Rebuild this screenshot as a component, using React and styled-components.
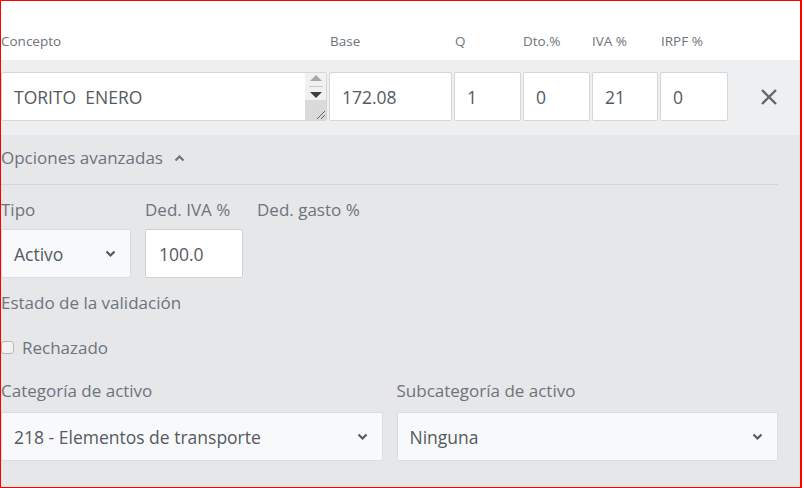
import styled, { createGlobalStyle } from "styled-components";

const GlobalStyle = createGlobalStyle`
  html, body {
    margin: 0;
    padding: 0;
    background: #ffffff;
  }
  * {
    box-sizing: border-box;
  }
`;

const Frame = styled.div`
  width: 802px;
  height: 488px;
  border: 1px solid #ff0000;
  border-right-width: 2px;
  background: #ffffff;
  font-family: "Open Sans", "Liberation Sans", sans-serif;
  overflow: hidden;
  display: flex;
  flex-direction: column;
`;

const cols = "326px 123px 67px 67px 66px 68px 1fr";

const HeaderRow = styled.div`
  height: 59px;
  display: grid;
  grid-template-columns: ${cols};
  column-gap: 2px;
  align-items: end;
  padding-bottom: 10px;
`;

const HeadLabel = styled.span`
  font-size: 13.5px;
  color: #6e737c;
  padding-left: ${(p) => p.$pad || 0}px;
  line-height: 18px;
`;

const LineBand = styled.div`
  background: #eeeff1;
  padding: 12px 0 14px;
  display: grid;
  grid-template-columns: ${cols};
  column-gap: 2px;
  align-items: center;
`;

const Field = styled.div`
  position: relative;
  height: 49px;
  background: #ffffff;
  border: 1px solid #d6d6d6;
  border-radius: 2px;
  display: flex;
  align-items: center;
  padding-left: 12px;
  font-size: 17.5px;
  color: #555a61;
`;

const Spinner = styled.div`
  position: absolute;
  top: 0;
  right: 0;
  width: 21px;
  height: 100%;
  display: flex;
  flex-direction: column;
`;

const SpinTop = styled.div`
  height: 27px;
  background: #f1f1f1;
  display: flex;
  flex-direction: column;
  align-items: center;
  justify-content: center;
  gap: 5px;
`;

const Tri = styled.div`
  width: 0;
  height: 0;
  border-left: 6px solid transparent;
  border-right: 6px solid transparent;
  ${(p) =>
    p.$up
      ? "border-bottom: 6px solid #a8a8a8;"
      : "border-top: 6px solid #3c3c3c;"}
`;

const SpinSep = styled.div`
  width: 14px;
  height: 1px;
  background: #c8c8c8;
`;

const Grip = styled.div`
  flex: 1;
  background: #dadada;
  display: flex;
  align-items: flex-end;
  justify-content: flex-end;
`;

const RemoveButton = styled.button`
  border: none;
  background: none;
  padding: 0;
  margin-left: 28px;
  width: 22px;
  height: 22px;
  display: flex;
  align-items: center;
  justify-content: center;
  cursor: pointer;
`;

const Advanced = styled.div`
  flex: 1;
  background: #e6e7e9;
  padding-right: 22px;
`;

const Toggle = styled.div`
  height: 50px;
  display: flex;
  align-items: center;
  gap: 11px;
  font-size: 17px;
  color: #6e737c;
  border-bottom: 1px solid #d3d4d6;
  padding-bottom: 4px;
`;

const Label = styled.div`
  font-size: 17px;
  color: #6e737c;
  line-height: 22px;
`;

const FieldGroup = styled.div`
  display: flex;
  flex-direction: column;
  gap: ${(p) => p.$gap || 8}px;
`;

const TypeRow = styled.div`
  display: flex;
  gap: 14px;
  margin-top: 14px;
`;

const SelectBox = styled.div`
  height: 49px;
  width: ${(p) => (p.$w ? `${p.$w}px` : "100%")};
  background: #f8f9fb;
  border: 1px solid #dcdddf;
  border-radius: 2px;
  display: flex;
  align-items: center;
  justify-content: space-between;
  padding: 0 14px 0 12px;
  font-size: 17.5px;
  color: #555a61;
`;

const TextBox = styled.div`
  height: 49px;
  width: ${(p) => p.$w}px;
  background: #ffffff;
  border: 1px solid #d0d0d0;
  border-radius: 2px;
  display: flex;
  align-items: center;
  padding-left: 13px;
  font-size: 17.5px;
  color: #555a61;
`;

const Section = styled.div`
  margin-top: ${(p) => p.$mt || 0}px;
`;

const CheckRow = styled.label`
  display: flex;
  align-items: center;
  gap: 8px;
  font-size: 17px;
  color: #6e737c;
  margin-top: 22px;
`;

const Box = styled.span`
  width: 13px;
  height: 13px;
  border: 1px solid #b8b8b8;
  border-radius: 3px;
  background: #f3f3f3;
`;

const CategoryGrid = styled.div`
  display: grid;
  grid-template-columns: 1fr 1fr;
  column-gap: 14px;
  margin-top: 21px;
`;

const Chevron = ({ up, color = "#555a61" }) => (
  <svg width="11" height="8" viewBox="0 0 11 8">
    <path
      d={up ? "M1.5 6.5 L5.5 2.5 L9.5 6.5" : "M1.5 1.5 L5.5 5.5 L9.5 1.5"}
      fill="none"
      stroke={color}
      strokeWidth="2.2"
    />
  </svg>
);

const Select = ({ value, w }) => (
  <SelectBox $w={w}>
    <span>{value}</span>
    <Chevron />
  </SelectBox>
);

const App = () => (
  <>
    <GlobalStyle />
    <Frame>
      <HeaderRow>
        <HeadLabel>Concepto</HeadLabel>
        <HeadLabel $pad={1}>Base</HeadLabel>
        <HeadLabel $pad={1}>Q</HeadLabel>
        <HeadLabel>Dto.%</HeadLabel>
        <HeadLabel>IVA %</HeadLabel>
        <HeadLabel $pad={1}>IRPF %</HeadLabel>
        <span />
      </HeaderRow>

      <LineBand>
        <Field>
          TORITO&nbsp; ENERO
          <Spinner>
            <SpinTop>
              <Tri $up />
              <SpinSep />
              <Tri />
            </SpinTop>
            <Grip>
              <svg width="12" height="12" viewBox="0 0 12 12">
                <path d="M3 11 L11 3 M7 11 L11 7" stroke="#666" strokeWidth="1" />
              </svg>
            </Grip>
          </Spinner>
        </Field>
        <Field>172.08</Field>
        <Field>1</Field>
        <Field>0</Field>
        <Field>21</Field>
        <Field>0</Field>
        <RemoveButton aria-label="Eliminar">
          <svg width="18" height="18" viewBox="0 0 18 18">
            <path d="M2 2 L16 16 M16 2 L2 16" stroke="#666" strokeWidth="2.4" />
          </svg>
        </RemoveButton>
      </LineBand>

      <Advanced>
        <Toggle>
          Opciones avanzadas
          <Chevron up color="#6e737c" />
        </Toggle>

        <TypeRow>
          <FieldGroup>
            <Label>Tipo</Label>
            <Select value="Activo" w={130} />
          </FieldGroup>
          <FieldGroup>
            <Label>Ded. IVA %</Label>
            <TextBox $w={98}>100.0</TextBox>
          </FieldGroup>
          <FieldGroup>
            <Label>Ded. gasto %</Label>
          </FieldGroup>
        </TypeRow>

        <Section $mt={14}>
          <Label>Estado de la validación</Label>
          <CheckRow>
            <Box />
            Rechazado
          </CheckRow>
        </Section>

        <CategoryGrid>
          <FieldGroup $gap={10}>
            <Label>Categoría de activo</Label>
            <Select value="218 - Elementos de transporte" />
          </FieldGroup>
          <FieldGroup $gap={10}>
            <Label>Subcategoría de activo</Label>
            <Select value="Ninguna" />
          </FieldGroup>
        </CategoryGrid>
      </Advanced>
    </Frame>
  </>
);

export default App;
